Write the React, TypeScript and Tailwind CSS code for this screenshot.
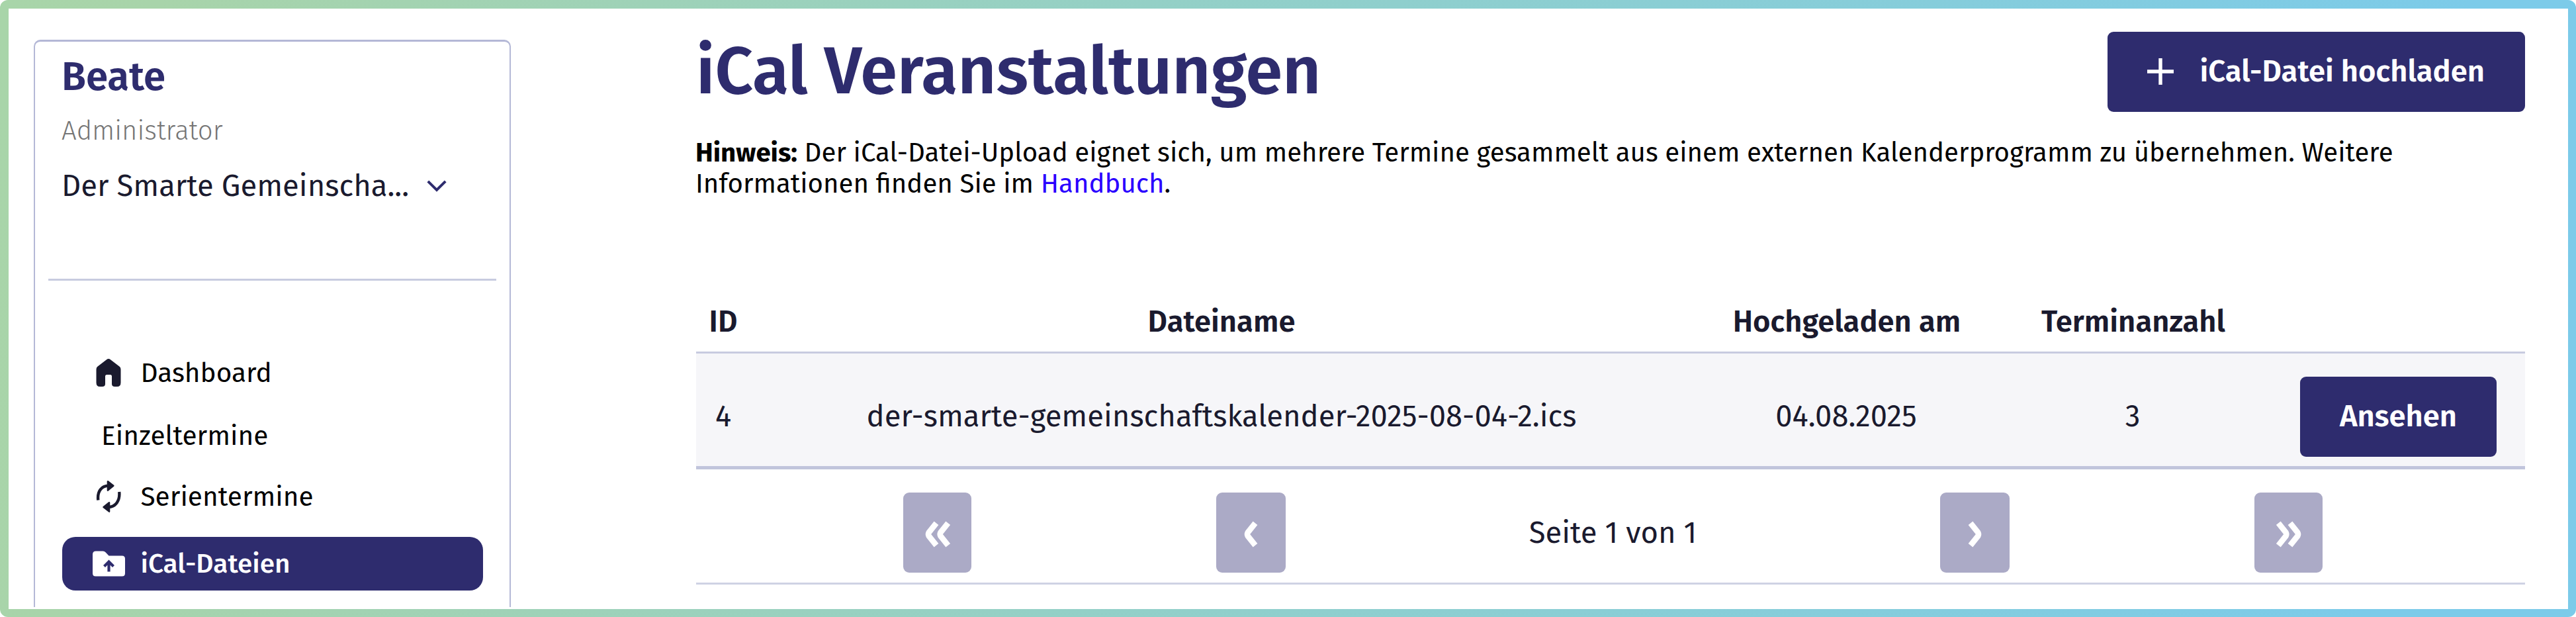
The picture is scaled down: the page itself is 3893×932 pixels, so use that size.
import React from "react";

function HomeIcon() {
  return (
    <svg className="h-[42px] w-[38px] shrink-0" viewBox="0 0 38 42" fill="#1a1a2e">
      <path d="M16 1.2Q19 -1.2 22 1.2L36 12Q37.5 13.5 37.5 16V36Q37.5 42 32 42H28.5Q24 42 24 38V26.5Q24 24 21.5 24H16.5Q14 24 14 26.5V38Q14 42 9.5 42H6Q0.5 42 0.5 36V16Q0.5 13.5 2 12Z" />
    </svg>
  );
}

function RepeatIcon() {
  return (
    <svg className="h-[50px] w-[38px] shrink-0" viewBox="0 0 38 50" fill="none" stroke="#1a1a2e">
      <path d="M3.3 30.5C1.8 17 8.5 9 19 8.8" strokeWidth="4.4" />
      <path d="M35.2 18C36.6 31 30 40.7 19 41" strokeWidth="4.4" />
      <path d="M18 2.2L26.3 8.8L18 15.6Z" fill="#1a1a2e" strokeWidth="2.6" strokeLinejoin="round" />
      <path d="M20 34.2L11.6 41L20 47.6Z" fill="#1a1a2e" strokeWidth="2.6" strokeLinejoin="round" />
    </svg>
  );
}

function FolderUploadIcon() {
  return (
    <svg className="h-[39px] w-[49px] shrink-0" viewBox="0 0 49 39" fill="none">
      <path d="M5 0.5H15.5Q18 0.5 19.8 2.4L24.5 7.5H44.5Q49 7.5 49 12V34Q49 38.5 44.5 38.5H4.5Q0 38.5 0 34V5.5Q0 0.5 5 0.5Z" fill="#fff" />
      <path d="M24.5 31.5V17M17.5 23.5L24.5 16.5L31.5 23.5" stroke="#2e2c6e" strokeWidth="4.2" />
    </svg>
  );
}

function NavItem({ icon, label, className }: { icon?: React.ReactNode; label: string; className: string }) {
  return (
    <li className={"flex h-[81px] items-center rounded-[20px] text-[40.6px] leading-[49px] " + className}>
      {icon && <span className="flex w-[73px] shrink-0 justify-center pr-[24px]">{icon}</span>}
      {label}
    </li>
  );
}

function Sidebar() {
  return (
    <aside className="h-[857px] w-[721px] shrink-0 rounded-t-[10px] border-x-2 border-t-[3px] border-[#b4b8d6] px-[20px] pt-[17px]">
      <div className="pl-[20px]">
        <h2 className="text-[60px] leading-[72px] font-semibold text-[#2e2c6e]">Beate</h2>
        <p className="mt-[21.5px] text-[40.1px] leading-[48px] font-light text-[#757575]">Administrator</p>
        <div className="mt-[31px] flex h-[56px] items-center text-[45.4px] leading-[56px] text-[#1a1a2e]">
          <span className="w-[531px]">Der Smarte Gemeinscha...</span>
          <svg className="ml-[21px] h-[18px] w-[30px]" viewBox="0 0 30 18" fill="none" stroke="#2e2c6e" strokeWidth="4">
            <path d="M1.8 1.8L15 15L28.2 1.8" />
          </svg>
        </div>
      </div>
      <hr className="mt-[112px] border-t-[3px] border-[#c8cbe0]" />
      <ul className="mt-[99px] ml-[21px] flex w-[636px] flex-col">
        <NavItem icon={<HomeIcon />} label="Dashboard" className="pl-[45.5px]" />
        <NavItem label="Einzeltermine" className="mt-[14px] pl-[59px]" />
        <NavItem icon={<RepeatIcon />} label="Serientermine" className="mt-[11px] pl-[45.5px]" />
        <NavItem icon={<FolderUploadIcon />} label="iCal-Dateien" className="mt-[20.5px] bg-[#2e2c6e] pl-[45.5px] font-medium text-white" />
      </ul>
    </aside>
  );
}

function PageButton({ double, forward }: { double?: boolean; forward?: boolean }) {
  return (
    <button className={"flex h-[121px] shrink-0 items-center justify-center rounded-[9px] bg-[#abaac6] " + (double ? "w-[103px]" : "w-[105px]")}>
      <svg
        className={"mt-[4px] h-[40px] " + (double ? "w-[38px]" : "w-[21px]") + (forward ? " -scale-x-100" : "")}
        viewBox={double ? "0 0 38 40" : "0 0 21 40"}
        fill="none"
        stroke="#fff"
        strokeWidth="8.6"
        strokeLinejoin="round"
      >
        <path d="M17 3.2L5.6 17.5Q4.4 20 5.6 22.5L17 36.8" />
        {double && <path d="M34.7 3.2L23.3 17.5Q22.1 20 23.3 22.5L34.7 36.8" />}
      </svg>
    </button>
  );
}

const COLS = "grid grid-cols-[82px_1424px_464px_402px_392px] items-center text-center";

export default function App() {
  return (
    <div className="h-[932px] w-[3893px] overflow-hidden rounded-[12px] bg-[linear-gradient(100deg,#a8d5a9_0%,#a8d4aa_6%,#8fcfcd_52%,#7ccbe9_92%,#7ccbe9_100%)] p-[12.5px] font-['Fira_Sans','Noto_Sans',sans-serif]">
      <div className="flex h-full bg-white pt-[47.5px] pl-[38.5px]">
        <Sidebar />
        <main className="-mt-[12.5px] ml-[280px] w-[2764px]">
          <header className="flex h-[121px] items-start justify-between">
            <h1 className="text-[100.8px] leading-[120px] font-semibold text-[#2e2c6e]">iCal Veranstaltungen</h1>
            <button className="flex h-[121px] w-[631px] items-center rounded-[9px] bg-[#2e2c6e] pl-[60px] text-[45.4px] font-semibold text-white">
              <svg className="h-[40px] w-[40px]" viewBox="0 0 40 40" stroke="#fff" strokeWidth="5.4">
                <path d="M20 0V40M0 20H40" />
              </svg>
              <span className="ml-[39.5px]">iCal-Datei hochladen</span>
            </button>
          </header>
          <p className="mt-[38px] text-[40.2px] leading-[47.5px] text-black">
            <b className="-ml-px font-bold">Hinweis:</b> Der iCal-Datei-Upload eignet sich, um mehrere Termine gesammelt aus einem externen Kalenderprogramm zu übernehmen. Weitere
            <br />
            <span className="-ml-px">Informationen finden Sie im</span> <a className="text-[#2a00ff]">Handbuch</a>.
          </p>
          <section className="mt-[139.5px] text-[45.4px] leading-[56px] text-[#1a1a2e]">
            <div className={COLS + " h-[90px] font-semibold"}>
              <span>ID</span>
              <span>Dateiname</span>
              <span className="pl-[2px]">Hochgeladen am</span>
              <span className="pl-[2px]">Terminanzahl</span>
            </div>
            <div className={COLS + " h-[178px] border-t-[3px] border-b-[5px] border-t-[#c8cbe0] border-b-[#c1c5dc] bg-[#f6f6f9] pt-[20px]"}>
              <span>4</span>
              <span>der-smarte-gemeinschaftskalender-2025-08-04-2.ics</span>
              <span>04.08.2025</span>
              <span>3</span>
              <button className="mr-[43px] h-[121px] w-[297px] justify-self-end rounded-[9px] bg-[#2e2c6e] font-semibold text-white">Ansehen</button>
            </div>
            <div className="flex h-[174px] items-center gap-[370px] border-b-[3px] border-[#cfd2e4] pt-[20px] pl-[313px]">
              <PageButton double />
              <PageButton />
              <span className="flex w-[249px] shrink-0 justify-center whitespace-nowrap">Seite 1 von 1</span>
              <PageButton forward />
              <PageButton double forward />
            </div>
          </section>
        </main>
      </div>
    </div>
  );
}
